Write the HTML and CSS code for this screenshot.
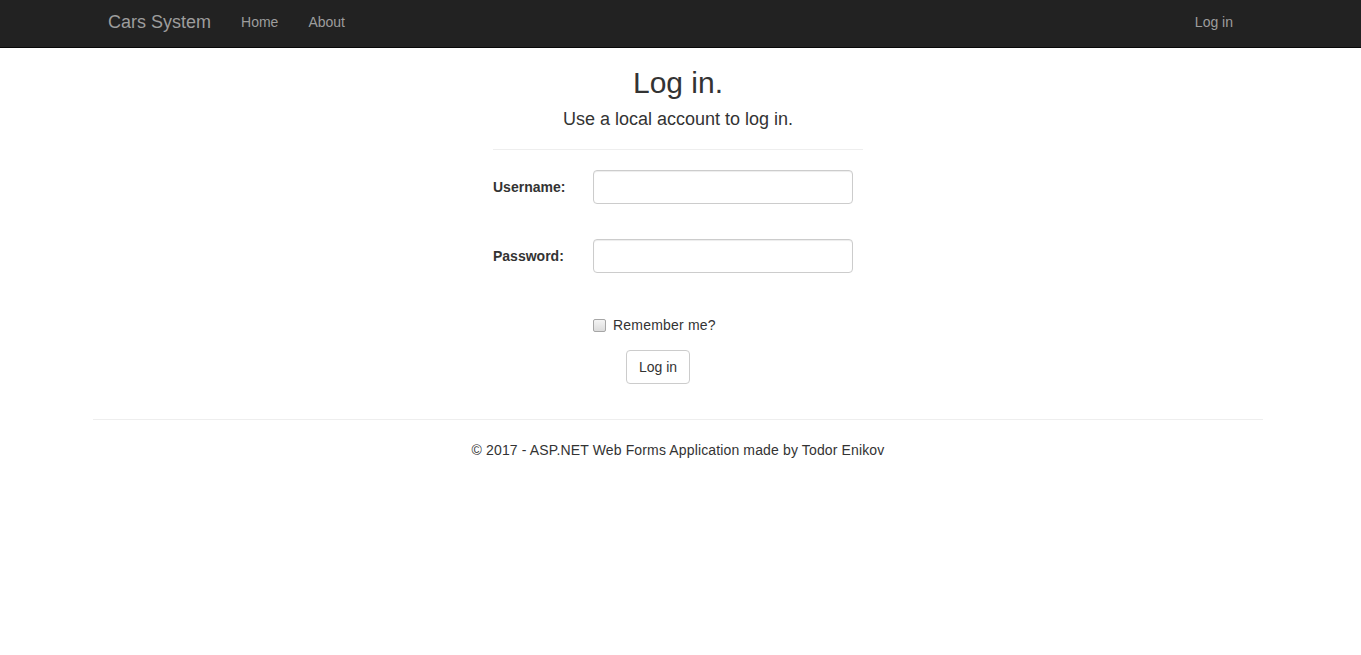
FILE: index.html
```html
<!DOCTYPE html>
<html lang="en">
<head>
<meta charset="utf-8">
<title>Log in - Cars System</title>
<link rel="stylesheet" href="styles.css">
</head>
<body>
<nav class="navbar">
  <div class="nav-inner">
    <a class="brand" href="#">Cars System</a>
    <ul class="nav-links">
      <li><a href="#">Home</a></li>
      <li><a href="#">About</a></li>
    </ul>
    <ul class="nav-links nav-right">
      <li><a href="#">Log in</a></li>
    </ul>
  </div>
</nav>
<div class="page">
  <div class="login">
    <h2 class="title">Log in.</h2>
    <h4 class="subtitle">Use a local account to log in.</h4>
    <hr class="rule">
    <div class="form-row">
      <label class="field-label" for="user">Username:</label>
      <input class="field-input" id="user" type="text">
    </div>
    <div class="form-row row-second">
      <label class="field-label" for="pass">Password:</label>
      <input class="field-input" id="pass" type="password">
    </div>
    <div class="check-row">
      <input class="check" id="remember" type="checkbox">
      <label class="check-label" for="remember">Remember me?</label>
    </div>
    <div class="button-row">
      <button class="btn" type="button">Log in</button>
    </div>
  </div>
  <hr class="footer-rule">
  <footer class="footer">
    <p class="footer-text">&copy; 2017 - ASP.NET Web Forms Application made by Todor Enikov</p>
  </footer>
</div>
</body>
</html>
```
FILE: styles.css
```css
* { box-sizing: border-box; }

html, body {
  margin: 0;
  padding: 0;
  background: #fff;
}

body {
  font-family: "Liberation Sans", Arial, Helvetica, sans-serif;
  font-size: 14px;
  line-height: 20px;
  color: #333;
}

a { text-decoration: none; }

.navbar {
  height: 48px;
  background: #222;
  border-bottom: 1px solid #080808;
}

.nav-inner {
  width: 1170px;
  margin-left: calc(50% - 587.5px);
  padding: 0 15px 4px;
  height: 47px;
  display: flex;
  align-items: center;
}

.brand {
  margin-left: -15px;
  padding: 0 15px;
  font-size: 18px;
  line-height: 20px;
  color: #9d9d9d;
}

.nav-links {
  list-style: none;
  margin: 0;
  padding: 0;
  display: flex;
}

.nav-links a {
  display: block;
  padding: 0 15px;
  line-height: 20px;
  color: #9d9d9d;
}

.nav-right {
  margin-left: auto;
}

.page {
  width: 1170px;
  margin-left: calc(50% - 587.5px);
}

.login {
  width: 370px;
  margin: 0 auto;
}

.title {
  margin: 18px 0 0;
  font-size: 30px;
  line-height: 33px;
  font-weight: 500;
  text-align: center;
}

.subtitle {
  margin: 10px 0 0;
  font-size: 18px;
  line-height: 20px;
  font-weight: 500;
  text-align: center;
}

.rule {
  margin: 20px 0 0;
  border: 0;
  border-top: 1px solid #eee;
  height: 0;
}

.form-row {
  display: flex;
  align-items: center;
  margin-top: 20px;
}

.row-second {
  margin-top: 35px;
}

.field-label {
  width: 100px;
  font-weight: bold;
  line-height: 20px;
}

.field-input {
  width: 260px;
  height: 34px;
  margin: 0;
  padding: 6px 12px;
  font-family: inherit;
  font-size: 14px;
  color: #555;
  background: #fff;
  border: 1px solid #ccc;
  border-radius: 4px;
  box-shadow: inset 0 1px 1px rgba(0, 0, 0, 0.075);
}

.check-row {
  display: flex;
  align-items: center;
  height: 20px;
  margin-top: 42px;
  margin-left: 100px;
}

.check {
  -webkit-appearance: none;
  appearance: none;
  width: 13px;
  height: 13px;
  margin: 0 7px 0 0;
  border: 1px solid #a6a6a6;
  border-radius: 2px;
  background: linear-gradient(#f4f4f4, #dcdcdc);
}

.check-label {
  line-height: 20px;
  letter-spacing: 0.2px;
}

.button-row {
  margin-top: 15px;
  margin-left: 133px;
}

.btn {
  display: inline-block;
  height: 34px;
  padding: 6px 12px;
  font-family: inherit;
  font-size: 14px;
  line-height: 20px;
  color: #333;
  background: #fff;
  border: 1px solid #ccc;
  border-radius: 4px;
}

.footer-rule {
  margin: 35px 0 0;
  border: 0;
  border-top: 1px solid #eee;
  height: 0;
}

.footer-text {
  margin: 20px 0 0;
  text-align: center;
  letter-spacing: 0.14px;
}
```
